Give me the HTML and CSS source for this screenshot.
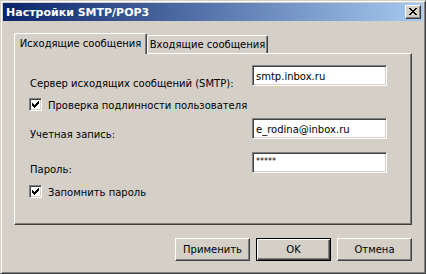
FILE: index.html
```html
<!DOCTYPE html>
<html lang="ru">
<head>
    <meta charset="UTF-8">
    <title>Настройки SMTP/POP3</title>
    <link rel="stylesheet" href="styles.css">
</head>
<body>
    <div class="window">
        <div class="titlebar">
            <span class="title">Настройки SMTP/POP3</span>
            <div class="close-btn">
                <svg width="8" height="7" viewBox="0 0 8 7" shape-rendering="crispEdges">
                    <path d="M0 0h2v1h-2zM6 0h2v1h-2zM1 1h2v1h-2zM5 1h2v1h-2zM2 2h4v1h-4zM3 3h2v1h-2zM2 4h4v1h-4zM1 5h2v1h-2zM5 5h2v1h-2zM0 6h2v1h-2zM6 6h2v1h-2z" fill="#000"/>
                </svg>
            </div>
        </div>

        <div class="content">
            <div class="tabs">
                <div class="tab active">Исходящие сообщения</div>
                <div class="tab">Входящие сообщения</div>
            </div>

            <div class="panel">
                <div class="row row-smtp">
                    <span class="label lbl-smtp">Сервер исходящих сообщений (SMTP):</span>
                    <div class="field">smtp.inbox.ru</div>
                </div>

                <div class="check-row check-auth">
                    <span class="checkbox">
                        <svg width="7" height="7" viewBox="0 0 7 7" shape-rendering="crispEdges">
                            <path d="M6 0h1v3h-1zM5 1h1v3h-1zM4 2h1v3h-1zM3 3h1v3h-1zM2 4h1v3h-1zM1 3h1v3h-1zM0 2h1v3h-1z" fill="#000"/>
                        </svg>
                    </span>
                    <span class="check-label">Проверка подлинности пользователя</span>
                </div>

                <div class="row row-account">
                    <span class="label lbl-account">Учетная запись:</span>
                    <div class="field">e_rodina@inbox.ru</div>
                </div>

                <div class="row row-pass">
                    <span class="label lbl-pass">Пароль:</span>
                    <div class="field pass">*****</div>
                </div>

                <div class="check-row check-remember">
                    <span class="checkbox">
                        <svg width="7" height="7" viewBox="0 0 7 7" shape-rendering="crispEdges">
                            <path d="M6 0h1v3h-1zM5 1h1v3h-1zM4 2h1v3h-1zM3 3h1v3h-1zM2 4h1v3h-1zM1 3h1v3h-1zM0 2h1v3h-1z" fill="#000"/>
                        </svg>
                    </span>
                    <span class="check-label">Запомнить пароль</span>
                </div>
            </div>

            <div class="buttons">
                <button class="btn">Применить</button>
                <button class="btn default">OK</button>
                <button class="btn">Отмена</button>
            </div>
        </div>
    </div>
</body>
</html>
```

FILE: styles.css
```css
* {
    box-sizing: border-box;
}
body {
    margin: 0;
    background: #d4d0c8;
    font-family: Tahoma, "DejaVu Sans", sans-serif;
    font-size: 10px;
    color: #000;
}
.window {
    width: 426px;
    height: 274px;
    background: #d4d0c8;
    border: 1px solid;
    border-color: #d4d0c8 #404040 #404040 #d4d0c8;
    box-shadow: inset 1px 1px #fff, inset -1px -1px #808080;
    padding: 2px;
}
.titlebar {
    height: 18px;
    display: flex;
    align-items: center;
    justify-content: space-between;
    padding: 0 2px 0 3px;
    background: linear-gradient(to right, #0a246a, #a6caf0);
}
.title {
    color: #fff;
    font-weight: bold;
    font-size: 11px;
}
.close-btn {
    width: 16px;
    height: 14px;
    background: #d4d0c8;
    border: 1px solid;
    border-color: #fff #404040 #404040 #fff;
    box-shadow: inset -1px -1px #808080;
    display: flex;
    align-items: center;
    justify-content: center;
    padding: 0 1px 1px 0;
}
.close-btn svg {
    display: block;
}
.content {
    padding: 0 11px;
}
.tabs {
    display: flex;
    align-items: flex-end;
    margin-top: 11px;
    height: 21px;
}
.tab {
    height: 18px;
    width: 121px;
    padding: 0;
    display: flex;
    align-items: center;
    justify-content: center;
    white-space: nowrap;
    background: #d4d0c8;
    border-top: 1px solid #fff;
    border-left: 1px solid #fff;
    border-right: 1px solid #404040;
    box-shadow: inset -1px 0 #808080;
    border-radius: 2px 2px 0 0;
}
.tab.active {
    height: 21px;
    width: 133px;
    margin-bottom: -1px;
    position: relative;
    z-index: 1;
    padding-bottom: 2px;
}
.panel {
    height: 172px;
    border: 1px solid;
    border-color: #fff #404040 #404040 #fff;
    box-shadow: inset -1px -1px #808080;
    padding: 11px 0 0 15px;
}
.row {
    display: flex;
    align-items: flex-start;
    height: 21px;
}
.label {
    width: 222px;
    line-height: 13px;
    white-space: nowrap;
}
.lbl-smtp {
    margin-top: 12px;
}
.lbl-account {
    margin-top: 10px;
}
.lbl-pass {
    margin-top: 11px;
}
.field {
    width: 135px;
    height: 21px;
    background: #fff;
    border: 1px solid;
    border-color: #808080 #fff #fff #808080;
    box-shadow: inset 1px 1px #404040, inset -1px -1px #d4d0c8;
    padding: 4px 3px 0 3px;
    line-height: 13px;
    white-space: nowrap;
}
.field.pass {
    font-size: 8px;
    padding-top: 2px;
}
.check-row {
    display: flex;
    align-items: center;
    height: 13px;
    margin-left: -1px;
}
.check-auth {
    margin-top: 12px;
}
.row-account {
    margin-top: 7px;
}
.row-pass {
    margin-top: 13px;
}
.check-remember {
    margin-top: 12px;
}
.checkbox {
    width: 13px;
    height: 13px;
    background: #fff;
    border: 1px solid;
    border-color: #808080 #fff #fff #808080;
    box-shadow: inset 1px 1px #404040, inset -1px -1px #d4d0c8;
    display: flex;
    align-items: center;
    justify-content: center;
}
.checkbox svg {
    display: block;
}
.check-label {
    margin-left: 6px;
    line-height: 13px;
    padding-top: 1px;
}
.buttons {
    display: flex;
    justify-content: flex-end;
    gap: 6px;
    margin-top: 13px;
}
.btn {
    width: 75px;
    height: 23px;
    font-family: inherit;
    font-size: 10px;
    color: #000;
    background: #d4d0c8;
    border: 1px solid;
    border-color: #fff #404040 #404040 #fff;
    box-shadow: inset -1px -1px #808080;
    border-radius: 0;
    padding: 0;
}
.btn.default {
    border-color: #000;
    box-shadow: inset 1px 1px #fff, inset -1px -1px #404040, inset -2px -2px #808080;
}
```
